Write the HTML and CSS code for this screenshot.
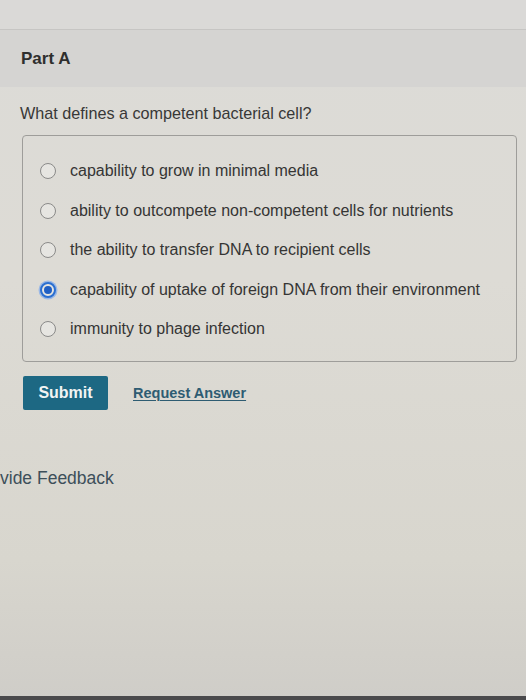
FILE: index.html
```html
<!DOCTYPE html>
<html>
<head>
<meta charset="utf-8">
<link rel="stylesheet" href="styles.css">
</head>
<body>
<div class="page">
  <div class="topbar"></div>
  <div class="part-header"><h2 class="part-title">Part A</h2></div>
  <div class="content">
    <p class="question">What defines a competent bacterial cell?</p>
    <div class="options">
      <label class="option"><span class="radio"></span><span class="opt-text">capability to grow in minimal media</span></label>
      <label class="option"><span class="radio"></span><span class="opt-text">ability to outcompete non-competent cells for nutrients</span></label>
      <label class="option"><span class="radio"></span><span class="opt-text">the ability to transfer DNA to recipient cells</span></label>
      <label class="option"><span class="radio checked"></span><span class="opt-text">capability of uptake of foreign DNA from their environment</span></label>
      <label class="option"><span class="radio"></span><span class="opt-text">immunity to phage infection</span></label>
    </div>
    <div class="actions">
      <button class="submit">Submit</button>
      <a class="request" href="#">Request Answer</a>
    </div>
  </div>
  <div class="feedback">vide Feedback</div>
  <div class="spacer"></div>
  <div class="bottom-edge"></div>
</div>
</body>
</html>
```
FILE: styles.css
```css
* { box-sizing: border-box; }
html, body { margin: 0; padding: 0; }
body {
  font-family: "Liberation Sans", Arial, Helvetica, sans-serif;
  color: #333331;
  background: #dcdad4;
  overflow: hidden;
}
.page {
  width: 526px;
  height: 700px;
  display: flex;
  flex-direction: column;
  background: linear-gradient(180deg, #dcdbd7 0%, #dddbd5 40%, #d8d6ce 80%, #cfcdc8 100%);
}
.topbar {
  height: 30px;
  background: #dad9d7;
  border-bottom: 1px solid #c6c5c3;
  flex: none;
}
.part-header {
  height: 57px;
  background: #d5d4d2;
  display: flex;
  align-items: center;
  padding-left: 21px;
  padding-top: 1px;
  flex: none;
}
.part-title {
  margin: 0;
  font-size: 17px;
  font-weight: bold;
  color: #2f2f2e;
}
.content {
  padding: 17px 9px 0 22px;
}
.question {
  margin: 0 0 0 -2px;
  font-size: 16.2px;
  line-height: 18px;
  color: #383837;
}
.options {
  margin-top: 13px;
  border: 1px solid #9e9d9a;
  border-radius: 4px;
  height: 227px;
  padding: 26px 0 0 17px;
  display: flex;
  flex-direction: column;
  gap: 21.5px;
}
.option {
  display: flex;
  align-items: center;
  gap: 14px;
  height: 18px;
}
.radio {
  width: 16px;
  height: 16px;
  border-radius: 50%;
  border: 1.5px solid #8a8a89;
  background: #e6e5e1;
  flex: none;
  position: relative;
}
.radio.checked {
  border: 2px solid #2b6fd0;
  background: #e6e5e1;
  box-shadow: 0 0 0 1.5px #9ab8e6;
}
.radio.checked::after {
  content: "";
  position: absolute;
  left: 2px; top: 2px;
  width: 8px; height: 8px;
  border-radius: 50%;
  background: #1f5fc4;
}
.opt-text {
  font-size: 16px;
  color: #353534;
  white-space: nowrap;
}
.actions {
  margin-top: 14px;
  display: flex;
  align-items: center;
  gap: 25px;
  padding-left: 1px;
}
.submit {
  width: 85px;
  height: 34px;
  border: none;
  border-radius: 2px;
  background: #1d6883;
  color: #f2f4f4;
  font-family: inherit;
  font-size: 16px;
  font-weight: bold;
  padding: 0;
}
.request {
  font-size: 14.5px;
  font-weight: bold;
  color: #2e5c72;
  text-decoration: underline;
  text-decoration-thickness: 1px;
  text-underline-offset: 2px;
}
.feedback {
  margin-top: 58px;
  font-size: 17.5px;
  line-height: 20px;
  color: #3d4f5a;
  white-space: nowrap;
}
.spacer { flex: 1; }
.bottom-edge {
  height: 4px;
  background: #4a4a4c;
  flex: none;
}
```
